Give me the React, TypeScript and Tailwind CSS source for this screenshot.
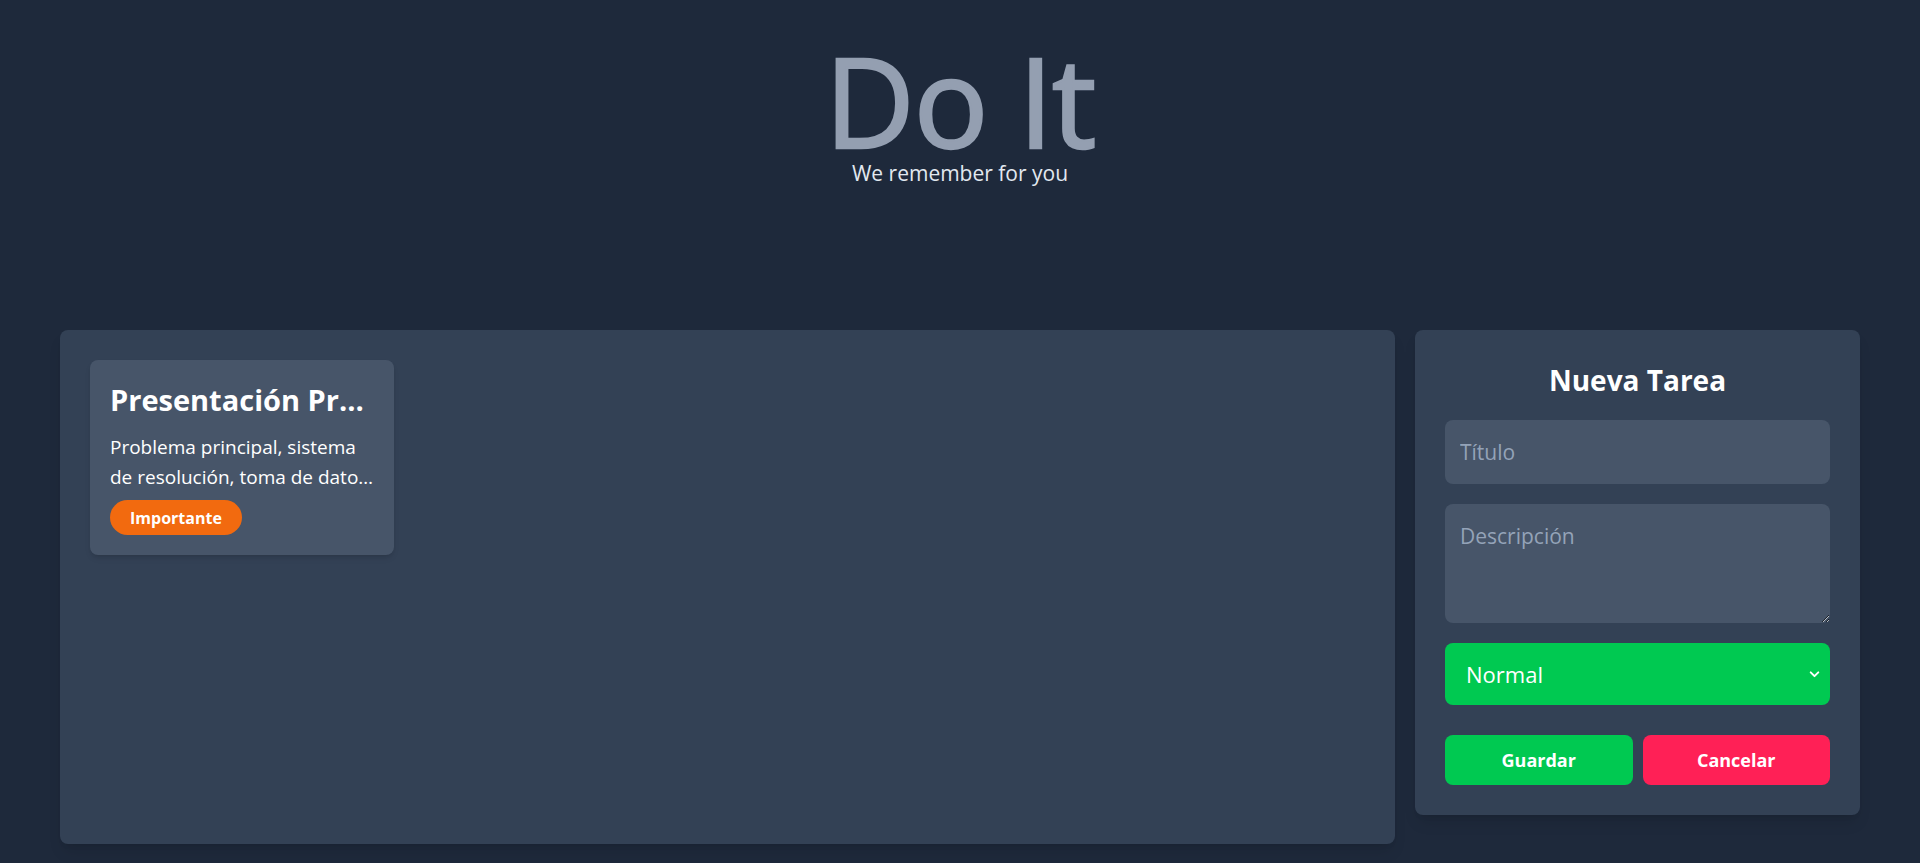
import React from "react";

function Chevron() {
  return (
    <svg width="13" height="13" viewBox="0 0 12 12" fill="none" className="pointer-events-none absolute right-[9px] top-1/2 -translate-y-1/2">
      <path d="M2.5 4.5 L6 8 L9.5 4.5" stroke="white" strokeWidth="1.8" strokeLinecap="round" strokeLinejoin="round" />
    </svg>
  );
}

export default function App() {
  return (
    <div className="min-h-[863px] bg-[#1e293b] font-['Open_Sans','Noto_Sans',sans-serif] px-[60px]">
      <header className="h-[330px] pt-[38px] flex flex-col items-center">
        <h1 className="text-[124px] leading-none text-[#949fb1] font-normal tracking-[-1px] [-webkit-text-stroke:2.5px_#949fb1]">Do It</h1>
        <p className="-mt-[3px] text-[21px] leading-7 text-[#e2e8f0]">We remember for you</p>
      </header>
      <main className="flex items-start gap-5">
        <section className="flex-1 min-w-0 h-[514px] rounded-lg bg-[#334155] p-[30px] shadow-lg">
          <div className="grid grid-cols-4 gap-5">
            <article className="min-w-0 rounded-lg bg-[#475569] p-5 shadow-md">
              <h3 className="text-[29px] leading-[40px] font-bold text-white truncate mb-3">Presentación Proyecto Final</h3>
              <p className="text-[19px] leading-[30px] text-white line-clamp-2">
                Problema principal, sistema de resolución, toma de datos y análisis de resultados
              </p>
              <span className="mt-2 inline-flex h-[35px] items-center rounded-full bg-[#f26a0f] px-[20px] text-[16px] font-bold text-white">
                Importante
              </span>
            </article>
          </div>
        </section>
        <aside className="w-[445px] shrink-0 rounded-lg bg-[#334155] p-[30px] shadow-lg">
          <h2 className="text-center text-[28px] leading-[40px] font-bold text-white mb-5">Nueva Tarea</h2>
          <div className="flex flex-col gap-5">
            <input
              placeholder="Título"
              className="h-[64px] w-full rounded-lg bg-[#475569] px-[15px] text-[21px] text-white placeholder:text-[#94a3b8] outline-none"
            />
            <textarea
              placeholder="Descripción"
              className="h-[119px] w-full rounded-lg bg-[#475569] px-[15px] pt-[18px] pb-3 text-[21px] leading-7 text-white placeholder:text-[#94a3b8] outline-none"
            />
            <div className="relative">
              <select className="h-[62px] w-full appearance-none rounded-lg bg-[#00c951] pl-[21px] text-[22px] text-white outline-none">
                <option>Normal</option>
                <option>Importante</option>
                <option>Urgente</option>
              </select>
              <Chevron />
            </div>
          </div>
          <div className="mt-[30px] grid grid-cols-2 gap-[10px]">
            <button className="h-[50px] rounded-lg bg-[#00c951] text-[18px] font-bold text-white">Guardar</button>
            <button className="h-[50px] rounded-lg bg-[#ff2056] text-[18px] font-bold text-white">Cancelar</button>
          </div>
        </aside>
      </main>
    </div>
  );
}
